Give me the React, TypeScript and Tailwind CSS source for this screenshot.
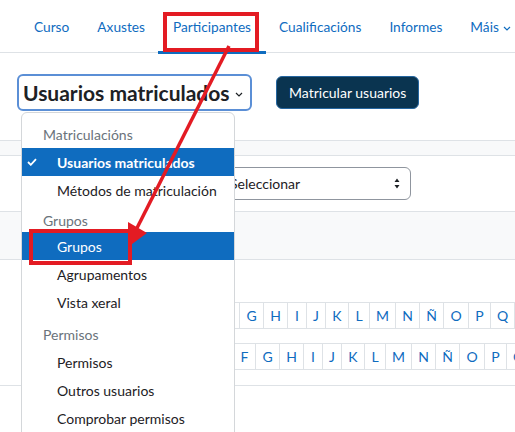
import React from 'react';

type NavItem = { label: string; active?: boolean; more?: boolean };

const navItems: NavItem[] = [
  { label: 'Curso' },
  { label: 'Axustes' },
  { label: 'Participantes', active: true },
  { label: 'Cualificacións' },
  { label: 'Informes' },
  { label: 'Máis', more: true },
];

type MenuEntry = { label: string; kind: 'header' | 'item'; selected?: boolean; hover?: boolean; h: string };

const menu: MenuEntry[] = [
  { label: 'Matriculacións', kind: 'header', h: 'h-[28px]' },
  { label: 'Usuarios matriculados', kind: 'item', selected: true, h: 'h-[28px]' },
  { label: 'Métodos de matriculación', kind: 'item', h: 'h-[28px]' },
  { label: 'Grupos', kind: 'header', h: 'h-[28px] pt-[4px]' },
  { label: 'Grupos', kind: 'item', hover: true, h: 'h-[28px]' },
  { label: 'Agrupamentos', kind: 'item', h: 'h-[28px]' },
  { label: 'Vista xeral', kind: 'item', h: 'h-[28px]' },
  { label: 'Permisos', kind: 'header', h: 'h-[32px] pt-[4px]' },
  { label: 'Permisos', kind: 'item', h: 'h-[28px]' },
  { label: 'Outros usuarios', kind: 'item', h: 'h-[28px]' },
  { label: 'Comprobar permisos', kind: 'item', h: 'h-[28px]' },
];

// initials bar cell widths, one class per letter
const letterWidth: Record<string, string> = {
  F: 'w-[22px]', G: 'w-[24px]', H: 'w-[24px]', I: 'w-[19px]', J: 'w-[19px]', K: 'w-[23px]',
  L: 'w-[21px]', M: 'w-[26px]', N: 'w-[24px]', Ñ: 'w-[24px]', O: 'w-[25px]', P: 'w-[22px]',
  Q: 'w-[24px]', R: 'w-[23px]', S: 'w-[22px]',
};
const letters = ['F', 'G', 'H', 'I', 'J', 'K', 'L', 'M', 'N', 'Ñ', 'O', 'P', 'Q', 'R', 'S'];

const InitialsBar: React.FC<{ offset: string }> = ({ offset }) => (
  <div className={`flex h-[27px] border-y border-[#dee2e6] w-max ${offset}`}>
    {letters.map((l) => (
      <div
        key={l}
        className={`${letterWidth[l]} flex items-center justify-center border-l border-[#dee2e6] text-[#0f6cbf] text-[14px]`}
      >
        {l}
      </div>
    ))}
  </div>
);

export default function App() {
  return (
    <div className="relative w-[515px] h-[432px] overflow-hidden bg-white font-['Lato',sans-serif] text-[#1d2125]">
      {/* secondary navigation */}
      <nav className="h-[53px] border-b border-[#dee2e6] flex pl-[20px]">
        {navItems.map((n) => (
          <div key={n.label} className="relative h-full flex items-center px-[14px] pt-[3px] text-[13.7px] text-[#0f6cbf] whitespace-nowrap">
            {n.label}
            {n.more && (
              <svg width="8" height="5" viewBox="0 0 8 5" className="ml-[4px] mt-[1px]">
                <path d="M1 1l3 3 3-3" fill="none" stroke="#0f6cbf" strokeWidth="1.2" />
              </svg>
            )}
            {n.active && <span className="absolute -left-[1px] -right-[1px] -bottom-[2px] h-[3px] bg-[#0f6cbf]" />}
          </div>
        ))}
      </nav>

      {/* page header */}
      <div className="flex items-center gap-[24px] pl-[17px] mt-[21px]">
        <div className="w-[235px] h-[37px] flex items-center justify-between pl-[4px] pr-[7px] rounded-[6px] border-2 border-[#5b8fd6]">
          <span className="text-[21px] font-bold leading-none whitespace-nowrap">Usuarios matriculados</span>
          <svg width="8" height="5" viewBox="0 0 8 5" className="mt-[3px]">
            <path d="M1 1l3 3 3-3" fill="none" stroke="#1d2125" strokeWidth="1.2" />
          </svg>
        </div>
        <button className="h-[33px] px-[12px] rounded-[6px] bg-[#0a3450] border border-[#2566a0] text-white text-[14px]">
          Matricular usuarios
        </button>
      </div>

      <div className="mt-[29px] h-[16px] border-y border-[#dee2e6] bg-[#f8f9fa]" />

      {/* filter row */}
      <div className="mt-[11px] pl-[217px]">
        <div className="w-[194px] h-[33px] flex items-center justify-between pl-[12px] pr-[10px] rounded-[6px] border border-[#8f959e] text-[14px]">
          <span>Seleccionar</span>
          <svg width="6" height="11" viewBox="0 0 6 11">
            <path d="M3 0.5L5.5 4H0.5z M3 10.5L0.5 7h5z" fill="#1d2125" />
          </svg>
        </div>
      </div>

      <div className="mt-[11px] h-[49px] border-y border-[#dee2e6] bg-[#f8f9fa]" />

      {/* initials bars */}
      <div className="mt-[42px]">
        <InitialsBar offset="ml-[217px]" />
      </div>
      <div className="mt-[14px]">
        <InitialsBar offset="ml-[233px]" />
      </div>
      <div className="mt-[15px] border-t border-[#dee2e6]" />

      {/* open select menu */}
      <div className="absolute top-[112px] left-[21px] w-[214px] h-[340px] bg-white border border-[#d4d7da] rounded-t-[6px] pt-[7px] text-[14px]">
        {menu.map((m, i) =>
          m.kind === 'header' ? (
            <div key={i} className={`${m.h} flex items-center pl-[21px] text-[#6a737b]`}>
              {m.label}
            </div>
          ) : (
            <div
              key={i}
              className={`${m.h} relative flex items-center pl-[35px] ${
                m.selected || m.hover ? 'bg-[#0f6cbf] text-white' : ''
              } ${m.selected ? 'font-bold' : ''}`}
            >
              {m.selected && (
                <svg width="10" height="8" viewBox="0 0 10 8" className="absolute left-[5px] top-[10px]">
                  <path d="M1 4l2.8 2.8L9 1.2" fill="none" stroke="white" strokeWidth="1.8" />
                </svg>
              )}
              {m.label}
            </div>
          )
        )}
      </div>

      {/* callouts */}
      <div className="absolute left-[163px] top-[12px] w-[96px] h-[40px] border-[4px] border-[#e31b23]" />
      <div className="absolute left-[29px] top-[229px] w-[103px] h-[36px] border-[4px] border-[#e31b23]" />
      <svg className="absolute inset-0 pointer-events-none" width="515" height="432">
        <line x1="229" y1="46" x2="137" y2="228" stroke="#e31b23" strokeWidth="3.5" />
        <polygon points="128,247 128,222 147,233" fill="#e31b23" />
      </svg>
    </div>
  );
}
